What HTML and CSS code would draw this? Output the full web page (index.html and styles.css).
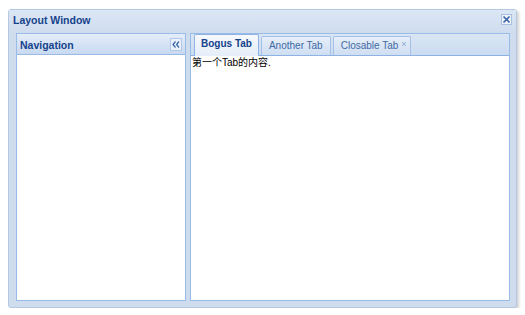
FILE: index.html
```html
<!DOCTYPE html>
<html lang="zh-CN">
<head>
    <meta charset="UTF-8">
    <title>Layout Window</title>
    <link rel="stylesheet" href="styles.css">
</head>
<body>
    <div class="window">
        <div class="window-header">
            <span class="window-title">Layout Window</span>
            <span class="tool-close">
                <svg width="9" height="9" viewBox="0 0 9 9"><path d="M1.5 1.5 L7.5 7.5 M7.5 1.5 L1.5 7.5" stroke="#3a64a8" stroke-width="1.6"/></svg>
            </span>
        </div>

        <div class="window-body">
            <div class="panel nav-panel">
                <div class="panel-header">
                    <span class="panel-title">Navigation</span>
                    <span class="tool-collapse">
                        <svg width="8" height="7" viewBox="0 0 8 7"><path d="M3.5 0.5 L1 3.5 L3.5 6.5 M7 0.5 L4.5 3.5 L7 6.5" fill="none" stroke="#3a64a8" stroke-width="1.2"/></svg>
                    </span>
                </div>
                <div class="panel-body"></div>
            </div>

            <div class="panel tab-panel">
                <div class="tab-strip">
                    <div class="tab active">Bogus Tab</div>
                    <div class="tab">Another Tab</div>
                    <div class="tab closable">Closable Tab <span class="tab-close">×</span></div>
                </div>
                <div class="panel-body tab-body">第一个Tab的内容.</div>
            </div>
        </div>
    </div>
</body>
</html>
```

FILE: styles.css
```css
body {
    margin: 0;
    background: #ffffff;
    font-family: "Liberation Sans", Arial, sans-serif;
    font-size: 11px;
}

.window {
    box-sizing: border-box;
    width: 509px;
    height: 299px;
    margin: 9px 0 0 8px;
    padding: 0 6px 6px 7px;
    background: #cfdcee;
    border: 1px solid #b5c8e2;
    border-radius: 3px;
    box-shadow: 2px 2px 3px rgba(0, 0, 0, 0.18);
    display: flex;
    flex-direction: column;
}

.window-header {
    box-sizing: border-box;
    height: 23px;
    display: flex;
    align-items: center;
    justify-content: space-between;
    background: linear-gradient(#dce7f5, #cfdcee);
    margin: 0 -6px 0 -7px;
    padding: 0 4px 4px;
}

.window-title {
    color: #15428b;
    font-weight: bold;
    font-size: 10.5px;
}

.tool-close {
    box-sizing: border-box;
    width: 11px;
    height: 11px;
    display: flex;
    align-items: center;
    justify-content: center;
    background: #eef3fa;
    border: 1px solid #a9bfdf;
}

.window-body {
    flex: 1;
    display: flex;
    gap: 4px;
}

.panel {
    box-sizing: border-box;
    display: flex;
    flex-direction: column;
    border: 1px solid #99bbe8;
}

.nav-panel {
    width: 170px;
}

.tab-panel {
    flex: 1;
}

.panel-header {
    height: 20px;
    display: flex;
    align-items: center;
    justify-content: space-between;
    padding: 0 3px;
    background: linear-gradient(#e4edf9, #c8d9f0);
    border-bottom: 1px solid #99bbe8;
}

.panel-title {
    color: #15428b;
    font-weight: bold;
    font-size: 10.5px;
    margin-top: 1px;
}

.tool-collapse {
    box-sizing: border-box;
    width: 12px;
    height: 13px;
    display: flex;
    align-items: center;
    justify-content: center;
    background: #e9f0fa;
    border: 1px solid #b4c9e6;
}

.panel-body {
    flex: 1;
    background: #ffffff;
}

.tab-strip {
    height: 21px;
    display: flex;
    align-items: flex-end;
    gap: 2px;
    padding-left: 3px;
    background: linear-gradient(#dae6f5, #cbdbf1);
    border-bottom: 1px solid #8db2e3;
}

.tab {
    box-sizing: border-box;
    height: 19px;
    padding: 0 7px 2px;
    display: flex;
    align-items: center;
    color: #416aa3;
    font-size: 10px;
    background: linear-gradient(#e6eef9, #cfdef2);
    border: 1px solid #a5c0e6;
    border-bottom: none;
    border-radius: 2px 2px 0 0;
}

.tab.active {
    height: 22px;
    margin-bottom: -1px;
    padding: 0 6px 4px;
    color: #15428b;
    font-weight: bold;
    background: linear-gradient(#f6f9fd, #e4edf9);
    border-color: #8db2e3;
}

.tab.closable {
    padding-right: 3px;
}

.tab-close {
    margin-left: 3px;
    font-size: 9px;
    color: #8aa6cf;
    align-self: flex-start;
    margin-top: 2px;
}

.tab-body {
    padding: 0 1px;
    color: #000000;
    font-family: "Liberation Sans", "Noto Sans CJK SC", sans-serif;
    font-size: 10px;
    line-height: 13px;
}
```
